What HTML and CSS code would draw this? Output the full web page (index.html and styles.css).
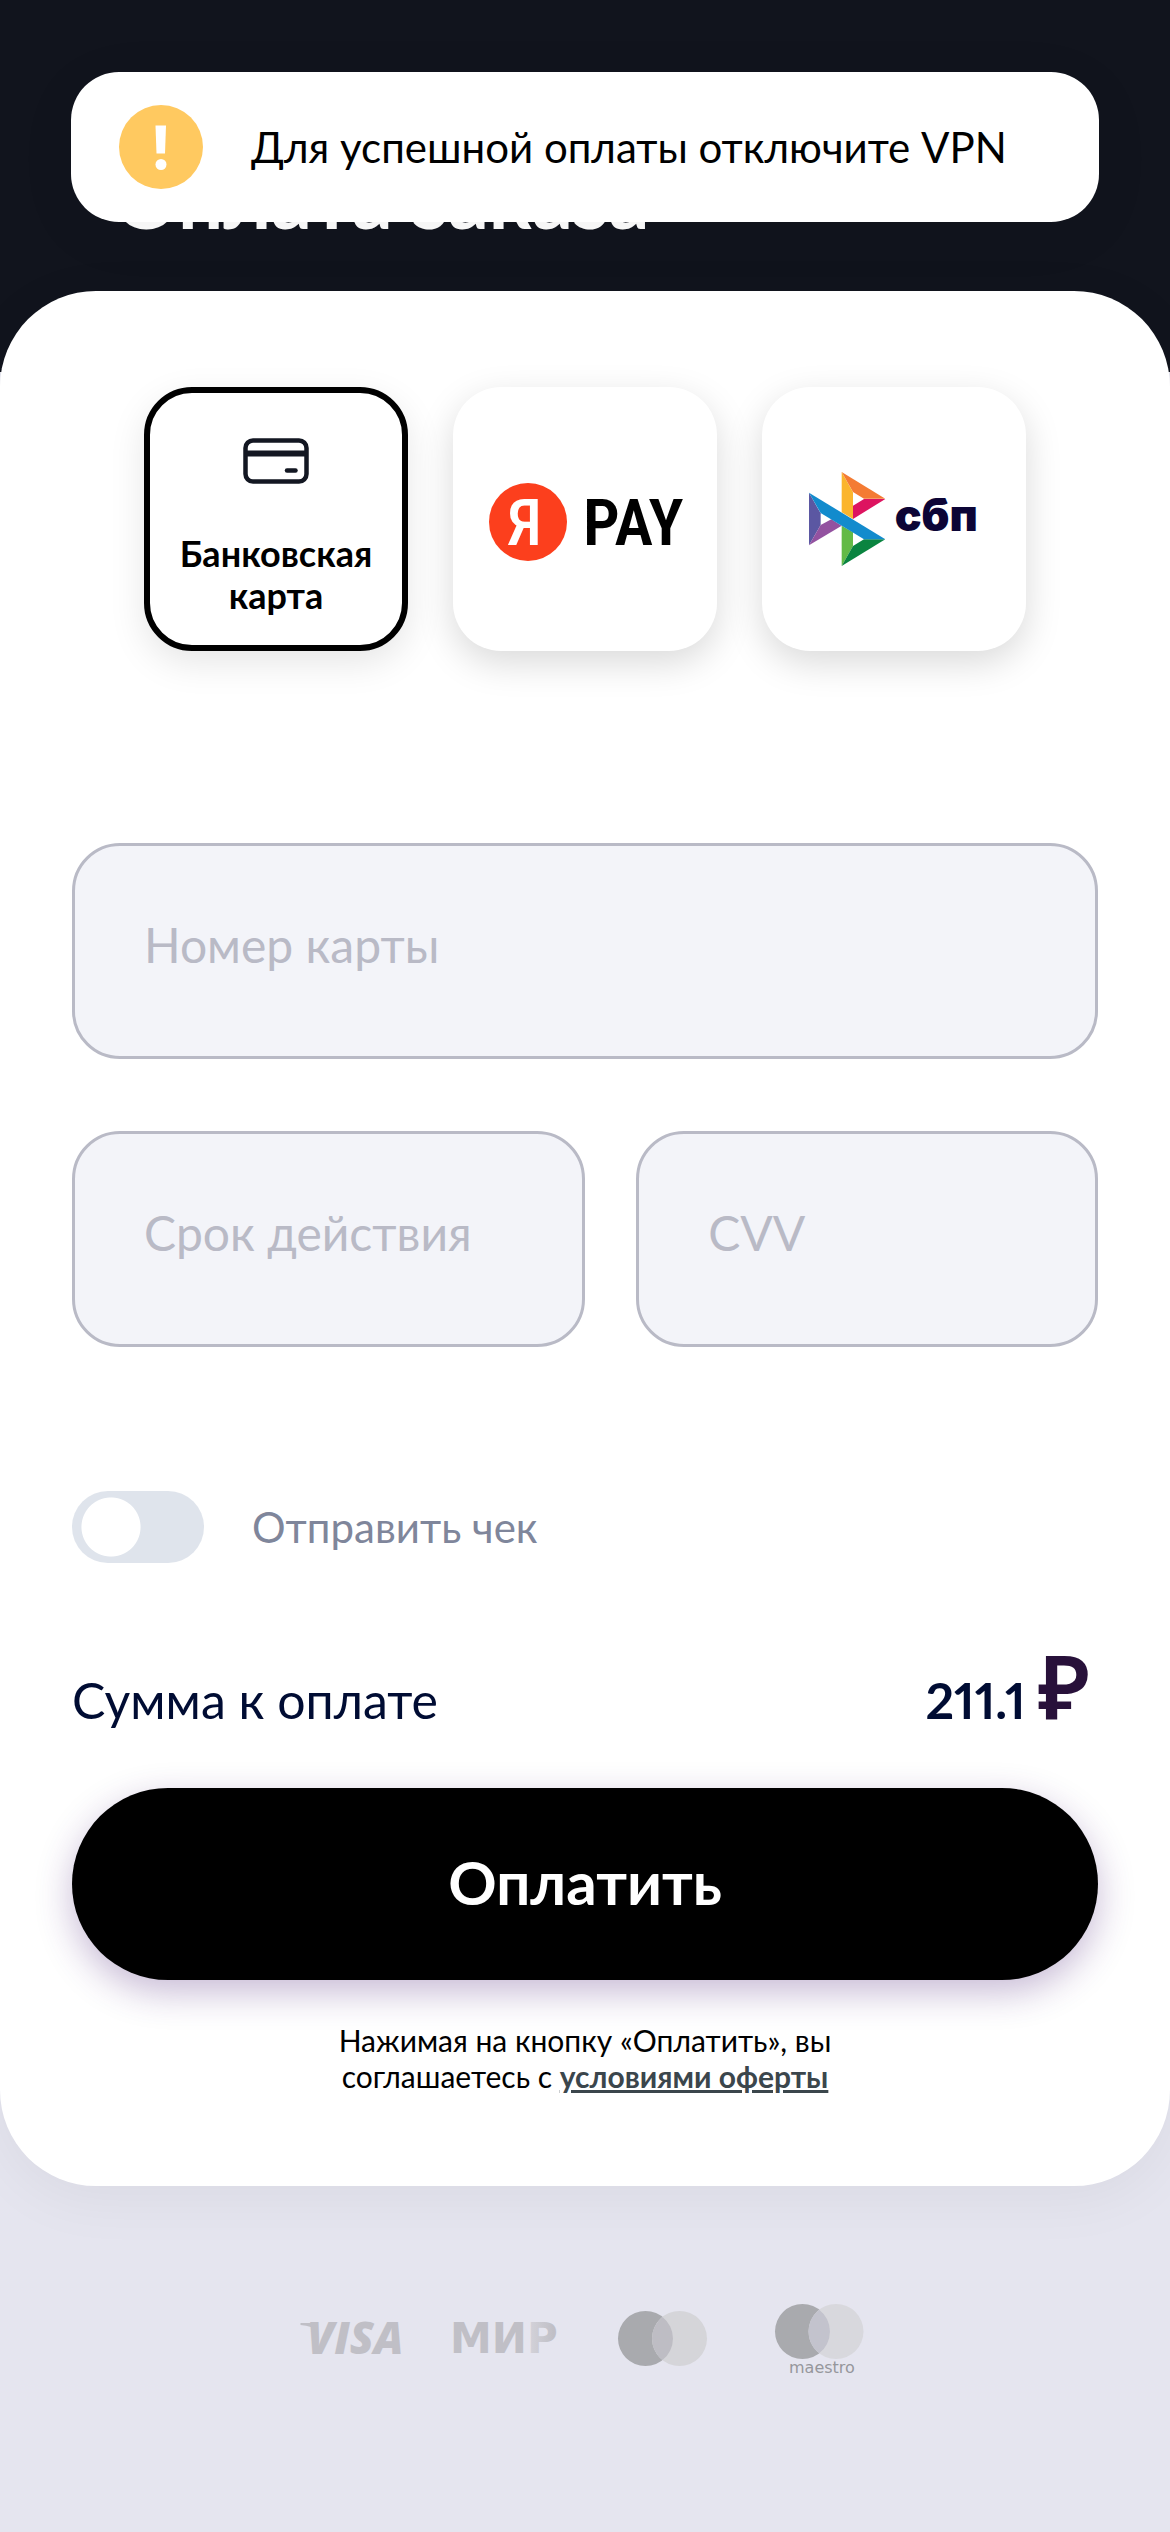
FILE: index.html
```html
<!DOCTYPE html>
<html lang="ru">
<head>
  <meta charset="utf-8">
  <meta name="viewport" content="width=device-width, initial-scale=1">
  <title>Оплата заказа</title>
  <link rel="stylesheet" href="styles.css">
</head>
<body>
  <header class="header">
    <h1 class="header__title">Оплата заказа</h1>
  </header>

  <div class="toast" role="alert">
    <svg class="toast__icon" viewBox="0 0 84 84" aria-hidden="true">
      <circle cx="42" cy="42" r="42" fill="#ffc960"/>
      <path d="M36.500 20.500h10.500l-1 28h-8.500z" fill="#fff"/>
      <circle cx="42" cy="59.500" r="5.500" fill="#fff"/>
    </svg>
    <p class="toast__text">Для успешной оплаты отключите VPN</p>
  </div>

  <main class="card">
    <form class="form">
      <div class="methods" role="radiogroup" aria-label="Способ оплаты">
        <label class="method method--card">
          <input class="method__input" type="radio" name="method" checked>
          <svg class="method__icon" viewBox="0 0 66 46" aria-hidden="true">
            <rect x="2.500" y="2.500" width="61" height="41" rx="7.500" fill="none" stroke="#131722" stroke-width="4.500"/>
            <path d="M2 15.500h62" stroke="#131722" stroke-width="6"/>
            <path d="M44 32.500h8.500" stroke="#131722" stroke-width="4.500" stroke-linecap="round"/>
          </svg>
          <span class="method__label">Банковская карта</span>
        </label>

        <label class="method">
          <input class="method__input" type="radio" name="method" aria-label="Я PAY">
          <svg class="method__yandex" viewBox="0 0 200 84">
            <circle cx="43" cy="45" r="39" fill="#fc3f1d"/>
            <text class="ya-letter" x="22" y="68">Я</text>
            <text class="ya-pay" x="98" y="68">PAY</text>
          </svg>
        </label>

        <label class="method">
          <input class="method__input" type="radio" name="method" aria-label="СБП">
          <svg class="method__sbp" viewBox="207 297 516 294">
            <path d="M210 365l35 62v35l-35 61z" fill="#5b57a2"/>
            <path d="M308 303l34 61v80l-34-20z" fill="#fbb52d"/>
            <path d="M308 303l131 80h-64l-33-20z" fill="#f47b33"/>
            <path d="M439 384l-97 60v-40l33-20z" fill="#dd1460"/>
            <path d="M308 464l34 20v41l-34 60z" fill="#63ba46"/>
            <path d="M439 505l-131 80 34-60 33-20z" fill="#0a8440"/>
            <path d="M210 523l35-61 32-17 31 19z" fill="#9352a0"/>
            <path d="M210 365l229 140h-64L245 426z" fill="#128bcd"/>
            <text class="sbp-word" x="467" y="479">сбп</text>
          </svg>
        </label>
      </div>

      <div class="fields">
        <input class="field field--number" type="text" inputmode="numeric" placeholder="Номер карты" aria-label="Номер карты">
        <input class="field" type="text" inputmode="numeric" placeholder="Срок действия" aria-label="Срок действия">
        <input class="field" type="text" inputmode="numeric" placeholder="CVV" aria-label="CVV">
      </div>

      <label class="receipt">
        <input class="switch" type="checkbox" role="switch">
        <span>Отправить чек</span>
      </label>

      <div class="total">
        <span class="total__label">Сумма к оплате</span>
        <span class="total__value">211.1 <span class="total__currency">₽</span></span>
      </div>

      <button class="pay" type="submit">Оплатить</button>

      <p class="terms">Нажимая на кнопку «Оплатить», вы соглашаетесь с <a class="terms__link" href="#offer">условиями оферты</a></p>
    </form>
  </main>

  <footer class="brands">
    <svg class="brand" viewBox="0 0 108 72">
      <path d="M3.500 19h15l2 8q-5-5-17-6z" fill="#c0bfc6"/>
      <text class="brand__visa" x="10" y="50">VISA</text>
    </svg>
    <svg class="brand" viewBox="0 0 108 72">
      <defs>
        <linearGradient id="mir" gradientUnits="userSpaceOnUse" x1="78" y1="0" x2="106" y2="0">
          <stop offset="0" stop-color="#d2d1d8"/>
          <stop offset="0.800" stop-color="#c0bfc6"/>
        </linearGradient>
      </defs>
      <text class="brand__mir" x="-3" y="49">МИ<tspan fill="url(#mir)">Р</tspan></text>
    </svg>
    <svg class="brand" viewBox="0 0 108 72" role="img" aria-label="Mastercard">
      <circle cx="36.500" cy="34.500" r="27.500" fill="#a9aaae"/>
      <circle cx="70.500" cy="34.500" r="27.500" fill="#d5d5d9"/>
      <path d="M53.500 12.900a27.500 27.500 0 0 1 0 43.200a27.500 27.500 0 0 1 0-43.200z" fill="#bebdc4"/>
    </svg>
    <svg class="brand" viewBox="0 0 108 72">
      <circle cx="37.500" cy="27.500" r="27.500" fill="#a9aaae"/>
      <circle cx="71" cy="27.500" r="27.500" fill="#d8d8dd"/>
      <path d="M54.200 5.700a27.500 27.500 0 0 1 0 43.600a27.500 27.500 0 0 1 0-43.600z" fill="#c3c3cd"/>
      <text class="brand__maestro" x="24" y="69">maestro</text>
    </svg>
  </footer>
</body>
</html>
```
FILE: styles.css
```css
* {
  box-sizing: border-box;
}

body {
  margin: 0;
  background: #e5e5ef;
  color: #000;
  font-family: Lato, "Noto Sans", sans-serif;
}

h1,
p {
  margin: 0;
}

.header {
  padding: 150px 114px 126px;
  background: #11141d;
}

.header__title {
  color: #fff;
  font-size: 80px;
  font-weight: 700;
  line-height: 96px;
}

.toast {
  position: absolute;
  top: 72px;
  left: 71px;
  right: 71px;
  display: flex;
  align-items: center;
  gap: 48px;
  min-height: 150px;
  padding: 33px 48px;
  border-radius: 48px;
  background: #fff;
  box-shadow: 0 12px 60px rgba(0, 0, 0, 0.06);
}

.toast__icon {
  flex: none;
  width: 84px;
}

.toast__text {
  font-size: 42px;
  line-height: 48px;
}

.card {
  margin-top: -81px;
  padding: 96px 72px 92px;
  border-radius: 96px;
  background: #fff;
  box-shadow: 0 12px 60px rgba(0, 0, 0, 0.05);
}

.methods {
  display: flex;
  justify-content: center;
  gap: 45px;
}

.method {
  display: flex;
  flex-direction: column;
  align-items: center;
  justify-content: center;
  width: 264px;
  height: 264px;
  border: 6px solid transparent;
  border-radius: 48px;
  background: #fff;
  box-shadow: 0 12px 36px rgba(0, 0, 0, 0.15);
  text-align: center;
  cursor: pointer;
}

.method--card {
  padding-top: 16px;
}

.method:has(:checked) {
  border-color: #000;
  box-shadow: 0 12px 36px rgba(0, 0, 0, 0.1);
}

.method__input {
  position: absolute;
  width: 1px;
  height: 1px;
  margin: 0;
  opacity: 0;
}

.method__icon {
  width: 66px;
  margin-bottom: 48px;
}

.method__label {
  font-size: 36px;
  font-weight: 700;
  line-height: 42px;
}

.method__yandex {
  width: 200px;
}

.ya-letter {
  fill: #fff;
  font: 500 65px "Roboto Condensed", sans-serif;
}

.ya-pay {
  fill: #000;
  font: 600 65px "Roboto Condensed", sans-serif;
}

.method__sbp {
  width: 172px;
}

.sbp-word {
  fill: #0c0536;
  font: 900 134px Inter, sans-serif;
}

.fields {
  display: grid;
  grid-template-columns: 10fr 9fr;
  gap: 72px 51px;
  margin-top: 192px;
}

.field {
  width: 100%;
  min-width: 0;
  height: 216px;
  padding: 0 69px 14px;
  border: 3px solid #b9bac6;
  border-radius: 48px;
  background: #f3f4f9;
  color: #000c33;
  font-family: inherit;
  font-size: 48px;
}

.field--number {
  grid-column: 1 / -1;
}

.field::placeholder {
  color: #b9bac6;
  opacity: 1;
}

.receipt {
  display: flex;
  align-items: center;
  gap: 48px;
  margin-top: 144px;
  color: #7f869b;
  font-size: 42px;
}

.switch {
  flex: none;
  width: 132px;
  height: 72px;
  margin: 0;
  border-radius: 36px;
  background: radial-gradient(circle 30px at 39px 50%, #fff 97%, transparent) #dfe4ec;
  appearance: none;
}

.switch:checked {
  background-position: 54px 0;
}

.total {
  display: flex;
  align-items: baseline;
  justify-content: space-between;
  margin-top: 74px;
  padding-right: 8px;
  color: #000c33;
}

.total__label {
  font-size: 50px;
  line-height: 60px;
}

.total__value {
  font-size: 50px;
  font-weight: 700;
  font-variant-numeric: proportional-nums;
  line-height: 96px;
}

.total__currency {
  color: #28113a;
  font-family: "Noto Sans", sans-serif;
  font-size: 88px;
  font-weight: 600;
}

.pay {
  display: block;
  width: 100%;
  height: 192px;
  margin-top: 40px;
  padding: 0 0 4px;
  border: 0;
  border-radius: 96px;
  background: #000;
  box-shadow: 0 12px 36px rgba(69, 25, 115, 0.3);
  color: #fff;
  font-family: inherit;
  font-size: 60px;
  font-weight: 700;
}

.terms {
  max-width: 520px;
  margin: 42px auto 0;
  font-size: 30px;
  line-height: 36px;
  text-align: center;
}

.terms__link {
  color: #3b464c;
  font-weight: 700;
}

.brands {
  display: flex;
  justify-content: center;
  gap: 48px;
  padding: 118px 48px;
}

.brand {
  width: 108px;
  overflow: visible;
}

.brand__visa {
  fill: #c0bfc6;
  font: italic 800 44px "Open Sans", sans-serif;
}

.brand__mir {
  fill: #c0bfc6;
  font: 700 42px "DejaVu Sans", sans-serif;
}

.brand__maestro {
  fill: #96979c;
  font: 400 16px "DejaVu Sans", sans-serif;
}
```
